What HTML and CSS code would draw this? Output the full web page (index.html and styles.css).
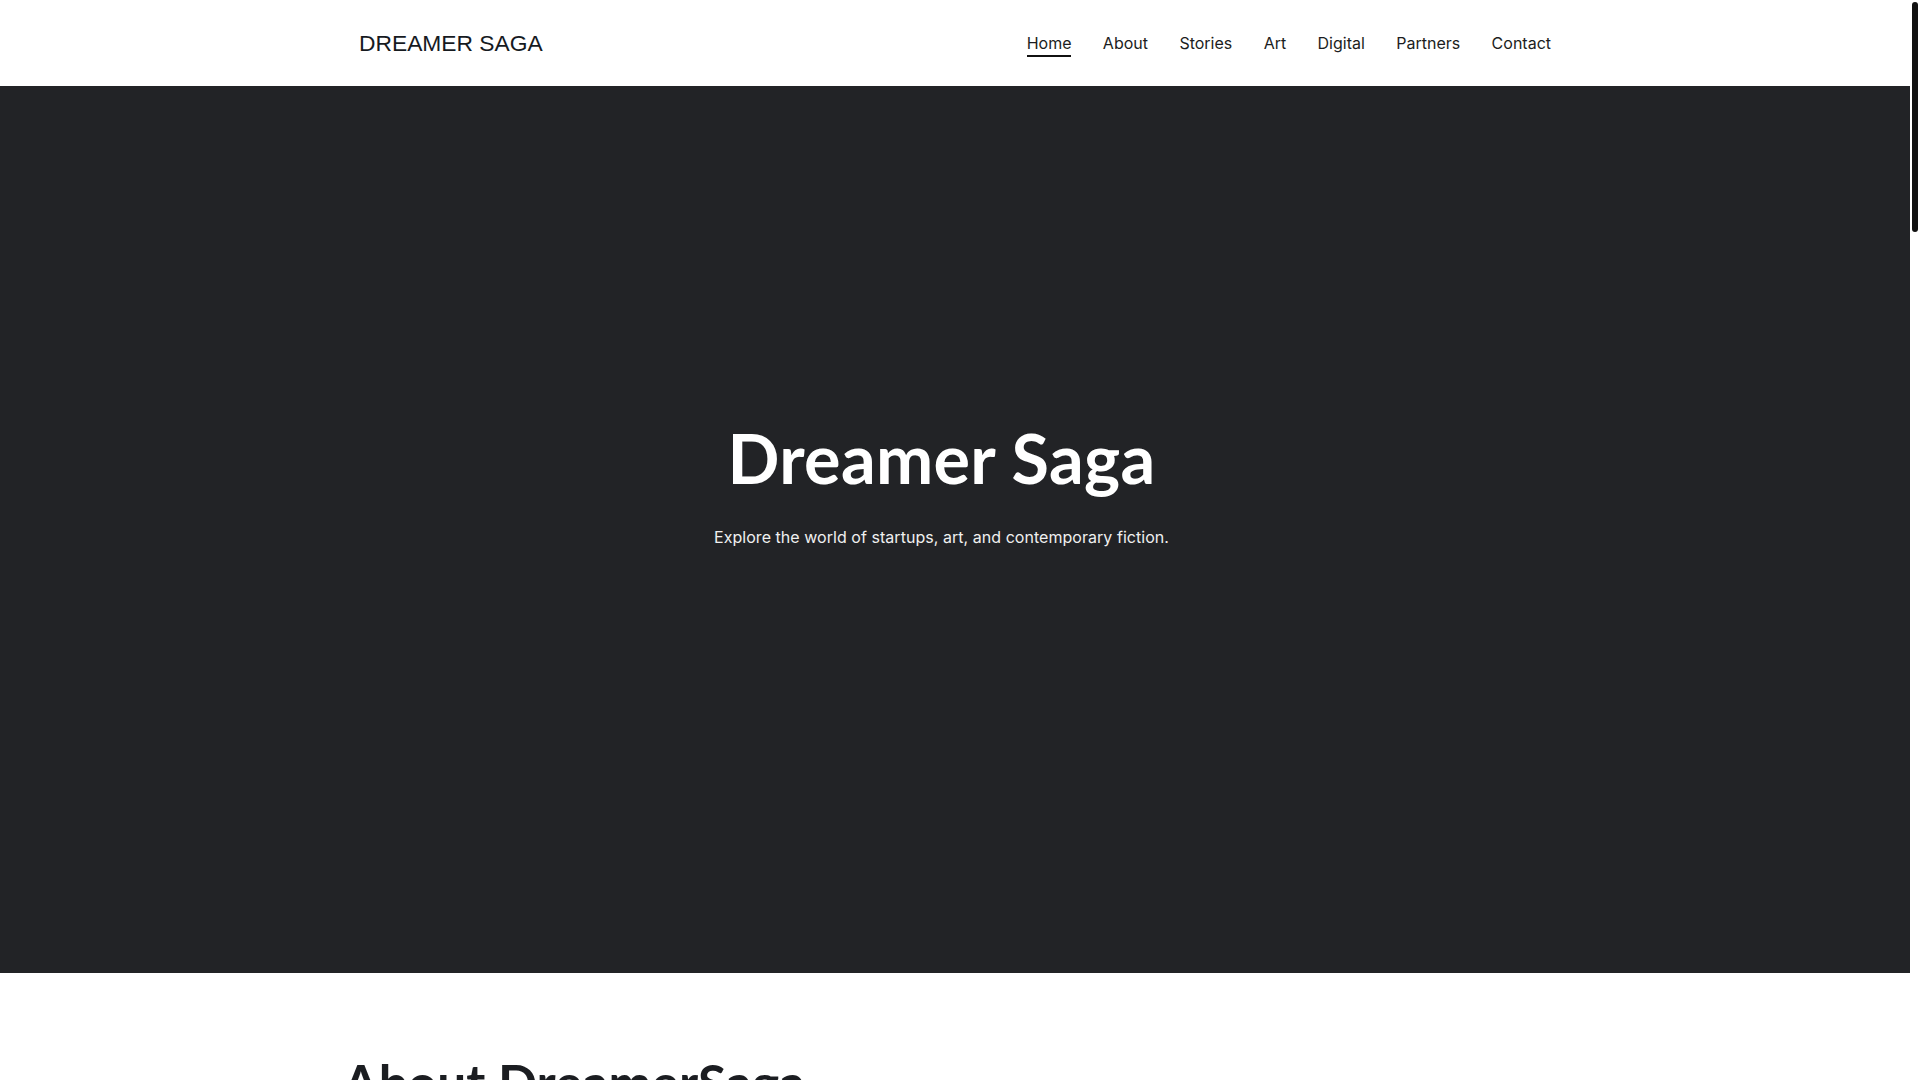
FILE: index.html
```html
<!DOCTYPE html>
<html lang="en">
<head>
<meta charset="utf-8">
<title>Dreamer Saga</title>
<link rel="stylesheet" href="styles.css">
</head>
<body>
<div class="viewport">
  <div class="page">
    <header class="site-header">
      <div class="container header-inner">
        <a class="logo" href="#">DREAMER SAGA</a>
        <nav class="nav">
          <a class="nav-link active" href="#">Home</a>
          <a class="nav-link" href="#">About</a>
          <a class="nav-link" href="#">Stories</a>
          <a class="nav-link" href="#">Art</a>
          <a class="nav-link" href="#">Digital</a>
          <a class="nav-link" href="#">Partners</a>
          <a class="nav-link" href="#">Contact</a>
        </nav>
      </div>
    </header>
    <main>
      <section class="hero">
        <div class="hero-content">
          <h1 class="hero-title">Dreamer Saga</h1>
          <p class="hero-sub">Explore the world of startups, art, and contemporary fiction.</p>
        </div>
      </section>
      <section class="about">
        <div class="container-wide">
          <h2 class="section-title">About DreamerSaga</h2>
          <p class="section-text">DreamerSaga is a home for founders, artists and storytellers. We publish essays on startups, showcase contemporary art, and share new works of fiction.</p>
        </div>
      </section>
    </main>
  </div>
  <div class="scroll-rail" aria-hidden="true">
    <div class="scroll-thumb"></div>
  </div>
</div>
</body>
</html>
```

FILE: styles.css
```css
* {
  box-sizing: border-box;
}

html,
body {
  margin: 0;
  height: 100%;
  overflow: hidden;
}

body {
  font-family: Inter, "Noto Sans", sans-serif;
  color: #1b1d21;
  background: #ffffff;
}

a {
  text-decoration: none;
  color: inherit;
}

.viewport {
  display: flex;
  height: 100vh;
  width: 100%;
}

.page {
  flex: 1;
  min-width: 0;
  overflow: hidden;
}

.scroll-rail {
  width: 10px;
  flex: 0 0 10px;
  background: #ffffff;
  padding: 2px 2px 0 2px;
}

.scroll-thumb {
  width: 6px;
  height: 230px;
  background: #111111;
  border-radius: 4px;
}

.container {
  max-width: 1240px;
  margin: 0 auto;
  padding: 0 24px;
}

.container-wide {
  max-width: 1224px;
  margin: 0 auto;
}

.site-header {
  background: #ffffff;
  height: 86px;
}

.header-inner {
  height: 100%;
  display: flex;
  align-items: center;
  justify-content: space-between;
}

.logo {
  font-family: "Liberation Sans", Arial, sans-serif;
  font-size: 22.8px;
  color: #161a1f;
}

.nav {
  display: flex;
  gap: 31.4px;
  align-items: center;
}

.nav-link {
  font-size: 16px;
  color: #1b1d21;
  line-height: 24px;
  border-bottom: 2px solid transparent;
  padding-bottom: 0;
  margin-top: 2px;
}

.nav-link.active {
  border-bottom-color: #111111;
}

.hero {
  background: #222326;
  height: 887px;
  display: flex;
  align-items: center;
  justify-content: center;
  padding-bottom: 93px;
}

.hero-content {
  text-align: center;
  color: #ffffff;
  padding-right: 27px;
}

.hero-title {
  font-family: Lato, "Noto Sans", sans-serif;
  font-weight: 700;
  font-size: 68.4px;
  line-height: 1.2;
  margin: 0 0 26px;
  letter-spacing: 0.3px;
}

.hero-sub {
  font-size: 16px;
  line-height: 24px;
  margin: 0;
  color: #f0f0f0;
  letter-spacing: 0.04px;
}

.about {
  padding-top: 79px;
}

.section-title {
  font-family: Lato, "Noto Sans", sans-serif;
  font-weight: 700;
  font-size: 51.4px;
  line-height: 1.2;
  margin: 0 0 24px;
  color: #1b1d21;
}

.section-text {
  font-size: 18px;
  line-height: 1.6;
  color: #44474d;
  max-width: 720px;
  margin: 0;
}
```
